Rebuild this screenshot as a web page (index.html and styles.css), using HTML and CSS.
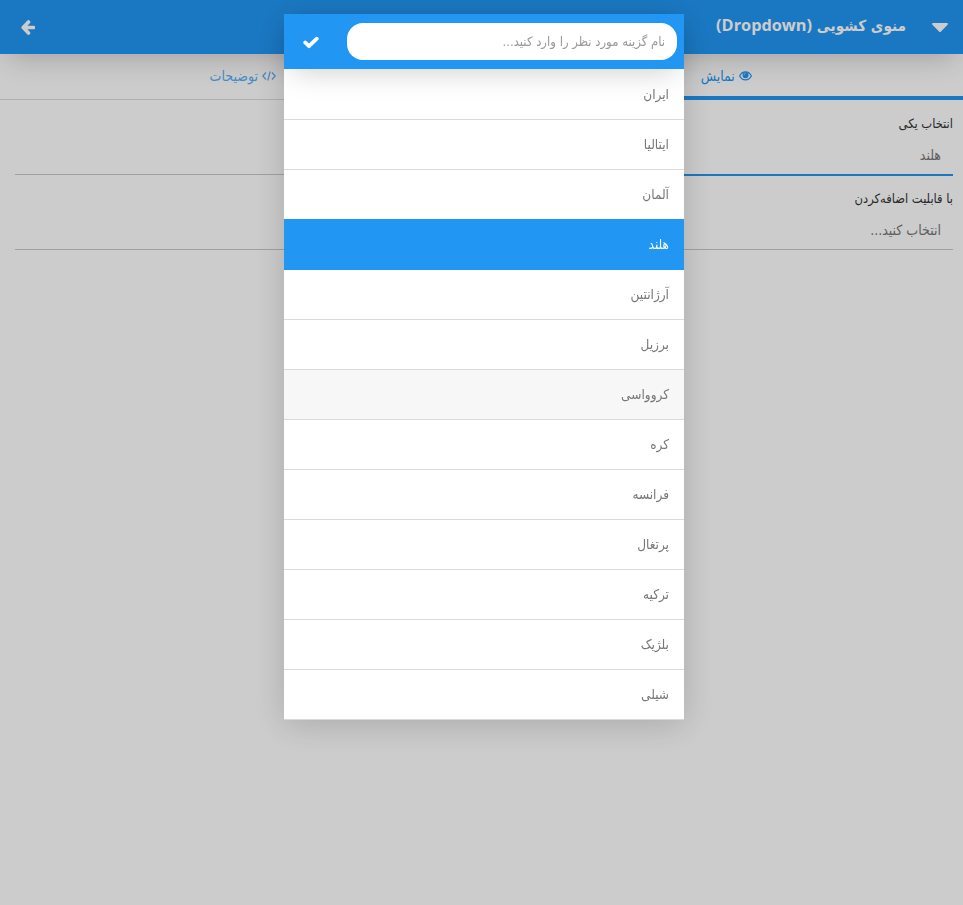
FILE: index.html
```html
<!DOCTYPE html>
<html lang="fa" dir="rtl">
<head>
<meta charset="utf-8">
<title>منوی کشویی</title>
<link rel="stylesheet" href="styles.css">
</head>
<body>
<div class="page">
  <header class="bar">
    <svg class="caret" width="16" height="9" viewBox="0 0 16 9"><path d="M1.200 0h13.600c1 0 1.400 1 .8 1.700L9 8.400c-.6.700-1.400.7-2 0L.4 1.700C-.2 1 .2 0 1.200 0z"/></svg>
    <h1>منوی کشویی <bdi>(Dropdown)</bdi></h1>
    <svg class="back" width="14" height="15" viewBox="0 0 14 15"><path d="M7.500 2 2.200 7.500 7.500 13M2.500 7.500H12.500"/></svg>
  </header>
  <nav class="tabs">
    <a class="tab active"><svg width="13" height="10" viewBox="0 0 13 10"><path d="M.6 5C3.500-.4 9.500-.4 12.400 5 9.500 10.200 3.500 10.200.6 5z" fill="none" stroke="currentColor" stroke-width="1.200"/><circle cx="6.500" cy="4.300" r="3" fill="currentColor"/><path d="M4.900 4.200q.1-1.500 1.600-1.600" fill="none" stroke="#fff" stroke-width=".6"/></svg><span>نمایش</span></a>
    <a class="tab"><svg width="14" height="10" viewBox="0 0 14 10"><path d="M4 1.500.8 5 4 8.500M10 1.500 13.200 5 10 8.500M8.200.5 5.800 9.500" fill="none" stroke="currentColor" stroke-width="1.200"/></svg><span>توضیحات</span></a>
  </nav>
  <main class="form">
    <div class="field"><label>انتخاب یکی</label><div class="value focus">هلند</div></div>
    <div class="field"><label>با قابلیت اضافه‌کردن</label><div class="value">انتخاب کنید...</div></div>
  </main>
</div>
<div class="shade"></div>
<section class="dialog">
  <div class="search">
    <input type="text" placeholder="نام گزینه مورد نظر را وارد کنید...">
    <svg width="16" height="13" viewBox="0 0 16 13"><path d="M2.200 6.500 6 10.200 13.800 2.700"/></svg>
  </div>
  <ul>
    <li>ایران</li><li>ایتالیا</li><li>آلمان</li><li class="selected">هلند</li><li>آرژانتین</li><li>برزیل</li><li class="hover">کروواسی</li><li>کره</li><li>فرانسه</li><li>پرتغال</li><li>ترکیه</li><li>بلژیک</li><li>شیلی</li>
  </ul>
</section>
</body>
</html>
```
FILE: styles.css
```css
* { box-sizing: border-box; }
body { margin: 0; height: 905px; overflow: hidden; background: #fff; color: #333; font: 13.5px/20px "DejaVu Sans Condensed", "DejaVu Sans", sans-serif; }
.bar { height: 54px; display: flex; align-items: center; padding: 0 15px 0 21px; background: #2196f3; color: #fff; box-shadow: 0 10px 30px -8px rgba(0,0,0,.24); position: relative; z-index: 1; }
.caret { fill: #fff; }
.bar h1 { margin: 0 26px 4px auto; font: bold 15.2px/24px "DejaVu Sans Condensed", "DejaVu Sans", sans-serif; }
.bar bdi { font: bold 16.3px/24px "Open Sans", sans-serif; }
.back { fill: none; stroke: #fff; stroke-width: 3.6; stroke-linecap: round; stroke-linejoin: round; }
.tabs { display: flex; height: 46px; }
.tab { flex: 1; display: flex; justify-content: center; align-items: center; gap: 4px; padding: 0 0 2px 6px; color: #2196f3; border-bottom: 1px solid #ddd; font-size: 14px; }
.tab > * { opacity: .75; }
.tab.active { border-bottom: 4px solid #2196f3; padding: 1px 0 0 10px; }
.tab.active > * { opacity: 1; }
.form { padding: 14px 10px 0 15px; }
.field { height: 75px; }
.field label { display: block; height: 20px; font-size: 12.8px; }
.value { height: 41px; padding: 11px 12px 0; color: #777; border-bottom: 1px solid #c8c8c8; font-size: 14px; }
.value.focus { height: 42px; border-bottom: 0; background: linear-gradient(#2196f3, #2196f3) right bottom / 50% 2px no-repeat, linear-gradient(#c8c8c8, #c8c8c8) left bottom 1px / 100% 1px no-repeat; }
.shade { position: fixed; inset: 0; background: rgba(0,0,0,.2); z-index: 2; }
.dialog { position: fixed; left: 284px; top: 14px; width: 400px; height: 706px; background: #fff; z-index: 3; box-shadow: 0 5px 32px rgba(0,0,0,.17); }
.search { height: 55px; display: flex; justify-content: space-between; align-items: center; padding: 0 7px 0 19px; background: #2196f3; box-shadow: 0 10px 30px -8px rgba(0,0,0,.2); position: relative; }
.search input { width: 330px; height: 37px; border: 0; border-radius: 16px; padding: 0 12px; font: 13px "DejaVu Sans Condensed", "DejaVu Sans", sans-serif; }
.search input::placeholder { color: #999; }
.search svg { fill: none; stroke: #fff; stroke-width: 3.8; stroke-linecap: round; stroke-linejoin: round; margin-top: 1px; }
ul { list-style: none; margin: 0; padding: 0; }
li { height: 50px; padding: 14px 15px 15px; border-bottom: 1px solid #dadada; color: #777; }
li:first-child { height: 51px; padding-top: 15px; }
li.selected { background: #2196f3; color: #fff; border-color: #2196f3; box-shadow: 0 -1px #2196f3; }
li.hover { background: #f7f7f7; }
```
